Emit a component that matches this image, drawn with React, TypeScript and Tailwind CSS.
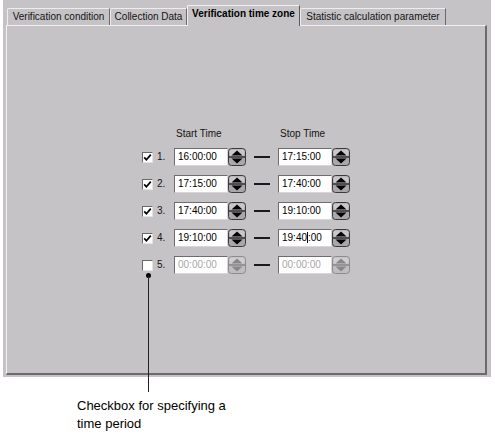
import React from 'react';

type Row = { n: number; start: string; stop: string; on: boolean; caret?: boolean };

const rows: Row[] = [
  { n: 1, start: '16:00:00', stop: '17:15:00', on: true },
  { n: 2, start: '17:15:00', stop: '17:40:00', on: true },
  { n: 3, start: '17:40:00', stop: '19:10:00', on: true },
  { n: 4, start: '19:10:00', stop: '19:40:00', on: true, caret: true },
  { n: 5, start: '00:00:00', stop: '00:00:00', on: false },
];

function Spinner({ disabled }: { disabled?: boolean }) {
  const edge = disabled ? '#8c8a8c' : '#3a3a3a';
  const tri = disabled ? '#8a888a' : '#000';
  return (
    <svg width="18" height="18" viewBox="0 0 18 18" className="block">
      <rect x="0.5" y="0.5" width="17" height="17" rx="3" fill={disabled ? '#c0bec0' : '#a9a7a9'} stroke={edge} />
      <rect x="1.5" y="1.5" width="15" height="6.5" rx="2" fill={disabled ? '#cfcdcf' : '#c9c7c9'} />
      <line x1="1" y1="9" x2="17" y2="9" stroke={edge} strokeWidth="1.6" />
      <path d="M3.5 7.6 L9 2.4 L14.5 7.6 Z" fill={tri} />
      <path d="M3.5 10.4 L9 15.6 L14.5 10.4 Z" fill={tri} />
    </svg>
  );
}

function TimeField({ value, disabled, caret }: { value: string; disabled?: boolean; caret?: boolean }) {
  return (
    <div className="h-[18px] w-[54px] bg-white border border-t-[#6e6c6e] border-l-[#6e6c6e] border-r-[#d8d6d8] border-b-[#d8d6d8] flex items-center pl-[3px]">
      <span className={`text-[10px] leading-none ${disabled ? 'text-[#a8a6a8]' : 'text-black'}`}>
        {caret ? (
          <>
            {value.slice(0, 5)}
            <span className="inline-block w-[1px] h-[11px] bg-black align-middle -mt-[2px]" />
            {value.slice(5)}
          </>
        ) : (
          value
        )}
      </span>
    </div>
  );
}

function Checkbox({ checked }: { checked: boolean }) {
  return (
    <div className="w-[11px] h-[11px] bg-white border border-t-[#6a686a] border-l-[#6a686a] border-r-[#e4e2e4] border-b-[#e4e2e4] flex items-center justify-center">
      {checked && (
        <svg width="9" height="9" viewBox="0 0 9 9">
          <path d="M1.2 4.4 L3.4 6.8 L7.8 1.6" fill="none" stroke="#000" strokeWidth="1.7" />
        </svg>
      )}
    </div>
  );
}

const tabs = [
  { label: 'Verification condition', w: 'w-[103px]' },
  { label: 'Collection Data', w: 'w-[77px]' },
  { label: 'Verification time zone', w: 'w-[113px]', active: true },
  { label: 'Statistic calculation parameter', w: 'w-[146px]' },
];

export default function App() {
  return (
    <div className="relative w-[495px] h-[436px] bg-white font-['Liberation_Sans',Arial,sans-serif] text-[#141414]">
      {/* dialog body */}
      <div className="ml-[3px] w-[488px] h-[377px] bg-[#c5c3c5] px-[3px] pt-[5px]">
        {/* tab strip */}
        <div className="flex items-end h-[20px] pl-[1px]">
          {tabs.map((t) =>
            t.active ? (
              <div
                key={t.label}
                className={`${t.w} h-[21px] -mb-[1px] relative z-10 bg-[#c5c3c5] border-t border-l border-t-[#f2f0f2] border-l-[#f2f0f2] border-r border-r-[#5a585a] rounded-tl-[2px] flex items-start justify-center pt-[3px] text-[10px] font-bold leading-none text-black`}
              >
                {t.label}
              </div>
            ) : (
              <div
                key={t.label}
                className={`${t.w} h-[17px] bg-[#c5c3c5] border-t border-l border-t-[#eeecee] border-l-[#eeecee] border-r border-r-[#6a686a] rounded-tl-[2px] flex items-center justify-center text-[10px] leading-none`}
              >
                {t.label}
              </div>
            )
          )}
        </div>

        {/* panel */}
        <div className="w-[481px] h-[350px] border-t border-l border-t-[#f2f0f2] border-l-[#f2f0f2] border-r-2 border-b-2 border-r-[#6c6a6c] border-b-[#6c6a6c] pt-[102px] pl-[135px]">
          <div className="grid grid-cols-[11px_21px_54px_18px_32px_54px_18px] gap-y-[9px] items-center">
            <div />
            <div />
            <div className="text-[10px] leading-[12px] pl-[2px] -mb-[1px]">Start Time</div>
            <div />
            <div />
            <div className="text-[10px] leading-[12px] pl-[2px] -mb-[1px]">Stop Time</div>
            <div />
            {rows.map((r) => (
              <React.Fragment key={r.n}>
                <Checkbox checked={r.on} />
                <div className="pl-[4px] text-[10px] leading-none">{r.n}.</div>
                <TimeField value={r.start} disabled={!r.on} />
                <Spinner disabled={!r.on} />
                <div className="flex justify-center">
                  <div className="w-[16px] h-[2px] bg-[#1a1a1a]" />
                </div>
                <TimeField value={r.stop} disabled={!r.on} caret={r.caret} />
                <Spinner disabled={!r.on} />
              </React.Fragment>
            ))}
          </div>
        </div>
      </div>

      {/* callout pointer */}
      <div className="absolute left-[146px] top-[273px] w-[5px] h-[5px] rounded-full bg-black" />
      <div className="absolute left-[148px] top-[275px] w-[1px] h-[117px] bg-[#222]" />

      {/* callout caption */}
      <div className="pl-[77px] pt-[20px] text-[13px] leading-[18px] text-black">
        Checkbox for specifying a
        <br />
        time period
      </div>
    </div>
  );
}
